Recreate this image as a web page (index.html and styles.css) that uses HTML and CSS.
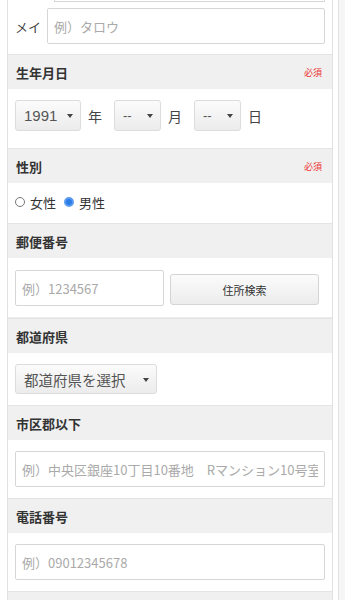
FILE: index.html
```html
<!DOCTYPE html>
<html lang="ja">
<head>
    <meta charset="UTF-8">
    <meta name="viewport" content="width=device-width, initial-scale=1.0">
    <title>会員登録</title>
    <link rel="stylesheet" href="styles.css">
</head>
<body>
<div class="page">
    <div class="panel">
        <div class="body name-body">
            <div class="prev-input"></div>
            <div class="name-row">
                <span class="name-label">メイ</span>
                <input type="text" class="text-input" placeholder="例）タロウ">
            </div>
        </div>

        <div class="head">生年月日<span class="req">必須</span></div>
        <div class="body date-body">
            <div class="select s-year">1991<span class="caret"></span></div>
            <span class="unit">年</span>
            <div class="select s-small">--<span class="caret"></span></div>
            <span class="unit">月</span>
            <div class="select s-small">--<span class="caret"></span></div>
            <span class="unit">日</span>
        </div>

        <div class="head">性別<span class="req">必須</span></div>
        <div class="body radio-body">
            <label class="radio"><span class="dot"></span>女性</label>
            <label class="radio"><span class="dot on"></span>男性</label>
        </div>

        <div class="head">郵便番号</div>
        <div class="body zip-body">
            <input type="text" class="text-input zip" placeholder="例）1234567">
            <button class="btn">住所検索</button>
        </div>

        <div class="head">都道府県</div>
        <div class="body pref-body">
            <div class="select s-pref">都道府県を選択<span class="caret"></span></div>
        </div>

        <div class="head">市区郡以下</div>
        <div class="body">
            <input type="text" class="text-input" placeholder="例）中央区銀座10丁目10番地　Rマンション10号室">
        </div>

        <div class="head">電話番号</div>
        <div class="body">
            <input type="text" class="text-input" placeholder="例）09012345678">
        </div>

        <div class="head"></div>
    </div>
    <div class="side"></div>
</div>
</body>
</html>
```

FILE: styles.css
```css
body {
    margin: 0;
    background-color: #fff;
    color: #333;
    font-family: "Noto Sans CJK JP", "Noto Sans", sans-serif;
    font-size: 13px;
    overflow: hidden;
}

.page {
    display: flex;
    height: 600px;
    padding-left: 7px;
}

.panel {
    width: 324px;
    border-left: 1px solid #e2e2e2;
    border-right: 1px solid #e2e2e2;
    background-color: #fff;
}

.side {
    margin-left: 5px;
    flex: 1;
    border-left: 1px solid #e2e2e2;
    background-color: #f6f6f6;
}

.head {
    display: flex;
    justify-content: space-between;
    align-items: center;
    height: 34px;
    padding: 0 10px 0 8px;
    background-color: #f0f0f0;
    border-top: 1px solid #e4e4e4;
    font-weight: bold;
    font-size: 13px;
    line-height: 1;
    color: #333;
}

.req {
    font-weight: normal;
    font-size: 9px;
    color: #e33;
}

.body {
    padding: 11px 7px 11px 7px;
}

.text-input {
    display: block;
    box-sizing: border-box;
    width: 100%;
    height: 36px;
    padding: 0 6px;
    border: 1px solid #d6d6d6;
    border-radius: 2px;
    font-family: inherit;
    font-size: 13px;
    color: #333;
    background: #fff;
}

.text-input::placeholder {
    color: #aaa;
}

/* name */
.name-body {
    padding-top: 0;
    padding-bottom: 10px;
}

.prev-input {
    height: 1px;
    margin: 0 0 6px 39px;
    border: 1px solid #d6d6d6;
    border-top: none;
}

.name-row {
    display: flex;
    align-items: center;
}

.name-label {
    width: 32px;
    font-size: 13px;
    color: #444;
}

.name-row .text-input {
    flex: 1;
}

/* selects */
.select {
    position: relative;
    box-sizing: border-box;
    display: inline-flex;
    align-items: center;
    height: 31px;
    padding: 0 8px;
    border: 1px solid #dcdcdc;
    border-radius: 3px;
    background: linear-gradient(#fbfbfb, #ececec);
    font-size: 15px;
    color: #555;
    font-family: "Liberation Sans", "Noto Sans CJK JP", sans-serif;
}

.caret {
    position: absolute;
    right: 7px;
    top: 13px;
    border-left: 3px solid transparent;
    border-right: 3px solid transparent;
    border-top: 4px solid #444;
}

.date-body {
    display: flex;
    align-items: center;
    padding: 11px 7px 17px 7px;
}

.s-year {
    width: 66px;
}

.s-small {
    width: 47px;
    font-size: 13px;
}

.unit {
    width: 33px;
    padding-left: 7px;
    box-sizing: border-box;
    font-size: 14px;
    color: #444;
}

.s-pref {
    width: 142px;
    height: 30px;
    padding-left: 8px;
    font-family: "Noto Sans CJK JP", sans-serif;
    font-size: 14.5px;
}

.pref-body {
    padding: 11px 7px 11px 7px;
}

/* radios */
.radio-body {
    display: flex;
    gap: 8px;
    height: 18px;
    align-items: center;
    padding: 10px 7px 12px 7px;
}

.radio {
    display: flex;
    align-items: center;
    gap: 5px;
    font-size: 13px;
    color: #333;
}

.dot {
    box-sizing: border-box;
    width: 10px;
    height: 10px;
    border: 1px solid #777;
    border-radius: 50%;
}

.dot.on {
    border: 2px solid #5b9cf0;
    background: radial-gradient(#2c7ce6 50%, #2c7ce6 55%);
}

/* zip */
.zip-body {
    display: flex;
    align-items: flex-start;
    gap: 6px;
    padding: 12px 7px 11px 7px;
    border-bottom: 1px solid #ececec;
}

.zip {
    width: 149px;
    flex: none;
}

.btn {
    width: 149px;
    height: 31px;
    margin-top: 4px;
    border: 1px solid #d4d4d4;
    border-radius: 3px;
    background: linear-gradient(#fbfbfb, #ececec);
    font-family: inherit;
    font-size: 11px;
    color: #333;
}
```
